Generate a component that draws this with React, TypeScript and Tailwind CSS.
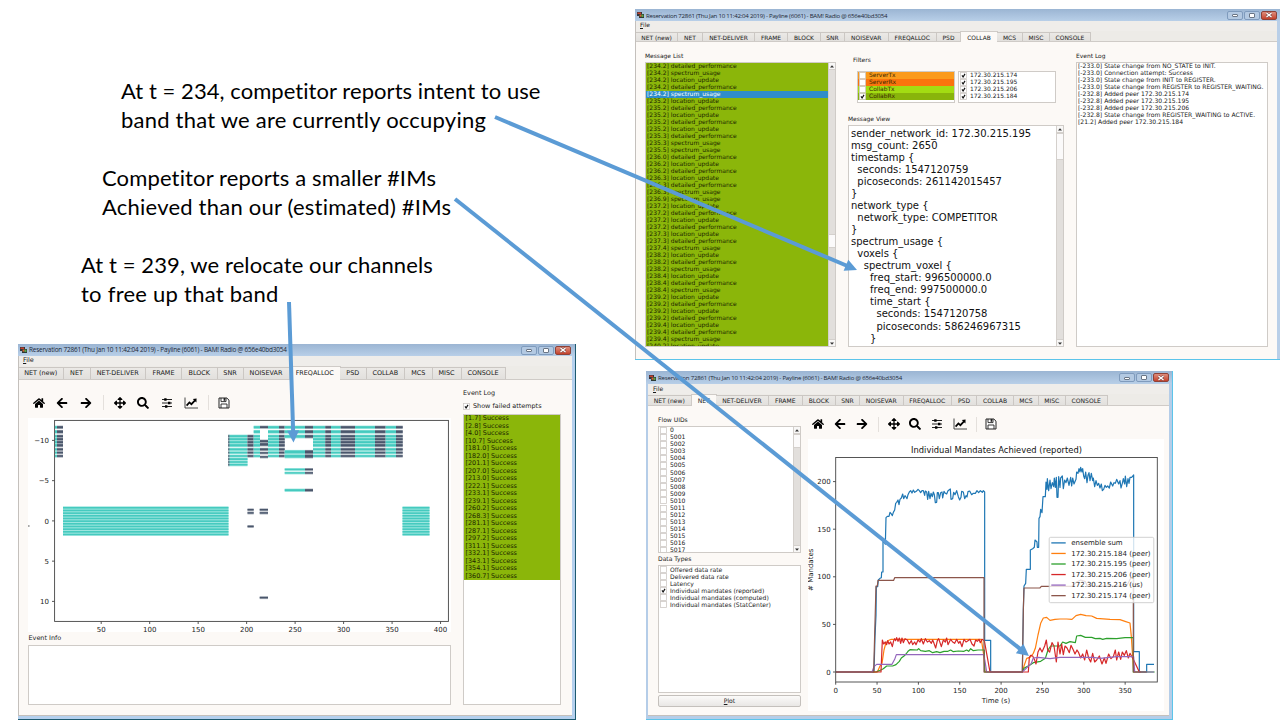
import React from "react";
import { FaHome, FaArrowLeft, FaArrowRight, FaArrowsAlt, FaSearch } from "react-icons/fa";

const TITLE = "Reservation 72861 (Thu Jan 10 11:42:04 2019) - Payline (6061) - BAM! Radio @ 656e40bd3054";

const TAB_NAMES = [
  "NET (new)", "NET", "NET-DELIVER", "FRAME", "BLOCK", "SNR", "NOISEVAR",
  "FREQALLOC", "PSD", "COLLAB", "MCS", "MISC", "CONSOLE",
];

const COLLAB_TABS = [
  "w-[42px]", "w-[25px]", "w-[52px]", "w-[33px]", "w-[33px]", "w-[24px]", "w-[43.5px]",
  "w-[48.5px]", "w-[24px]", "w-[36px]", "w-[26px]", "w-[27px]", "w-[41px]",
];
const FREQ_TABS = [
  "w-[44.5px]", "w-[27px]", "w-[55.5px]", "w-[36px]", "w-[35.5px]", "w-[26px]", "w-[46px]",
  "w-[50.5px]", "w-[26.5px]", "w-[38.5px]", "w-[27.5px]", "w-[29px]", "w-[44px]",
];
const NET_TABS = [
  "w-[43.5px]", "w-[24.5px]", "w-[53px]", "w-[33.5px]", "w-[33.5px]", "w-[24px]", "w-[43.5px]",
  "w-[48.5px]", "w-[25px]", "w-[37px]", "w-[25px]", "w-[26.5px]", "w-[42.5px]",
];

function CaptionButtons() {
  return (
    <div className="flex gap-px">
      <div className="flex h-[9px] w-[16px] items-center justify-center rounded-[2px] border border-[#7f9bbd] bg-[#b3c9e2]">
        <div className="mt-px h-[3px] w-[6px] rounded-[1px] border border-[#6a7686] bg-white" />
      </div>
      <div className="flex h-[9px] w-[16px] items-center justify-center rounded-[2px] border border-[#7f9bbd] bg-[#b3c9e2]">
        <div className="h-[5px] w-[6px] rounded-[1px] border border-[#6a7686] bg-white" />
      </div>
      <div className="flex h-[9px] w-[16px] items-center justify-center rounded-[2px] border border-[#8e4238] bg-linear-to-b from-[#dd8c7c] to-[#c4402a]">
        <svg width="8" height="6" viewBox="0 0 8 6">
          <path d="M1.5 1L6.5 5M6.5 1L1.5 5" stroke="#7c4a48" strokeWidth="2.4" />
          <path d="M1.5 1L6.5 5M6.5 1L1.5 5" stroke="#ffffff" strokeWidth="1.4" />
        </svg>
      </div>
    </div>
  );
}

function TitleBar({ heightClass, textClass, edgeClass }: { heightClass: string; textClass: string; edgeClass: string }) {
  return (
    <div className={`flex shrink-0 items-center bg-linear-to-b from-[#9bb5d3] to-[#b8cfe8] pl-[2px] ${edgeClass} ${heightClass}`}>
      <svg className="mr-[2px] shrink-0" width="7" height="6" viewBox="0 0 7 6">
        <rect x="0" y="0" width="5" height="4" fill="#30343c" />
        <rect x="0.5" y="0.5" width="3.6" height="1.5" fill="#c8402c" />
        <rect x="2" y="2" width="5" height="4" fill="#2c3a34" />
        <rect x="2.6" y="2.6" width="2" height="2" fill="#e06030" />
        <rect x="4.6" y="2.6" width="1.8" height="2.4" fill="#58a848" />
      </svg>
      <div className={`whitespace-nowrap font-['Open_Sans',sans-serif] text-[#1c2735] ${textClass}`}>{TITLE}</div>
      <div className="ml-auto">
        <CaptionButtons />
      </div>
    </div>
  );
}

function TabBar({ widths, active, heightClass }: { widths: string[]; active: string; heightClass: string }) {
  return (
    <div className={`flex shrink-0 items-end border-b border-[#cfcbc7] bg-[#edebe7] ${heightClass}`}>
      {TAB_NAMES.map((name, i) => (
        <div
          key={name}
          className={
            name === active
              ? `-mb-px -ml-px -mr-px box-content flex h-full shrink-0 items-center justify-center whitespace-nowrap border-x border-t border-[#cfcbc7] bg-[#fcf9f6] ${widths[i]}`
              : `flex h-[calc(100%-1px)] shrink-0 items-center justify-center whitespace-nowrap border-r border-t border-[#cbc7c3] bg-linear-to-b from-[#ebe9e6] to-[#e2e0dd] ${widths[i]}`
          }
        >
          {name}
        </div>
      ))}
    </div>
  );
}

function Check({ on }: { on?: boolean }) {
  return (
    <svg className="block shrink-0" width="7" height="7" viewBox="0 0 7 7">
      <rect x="0.5" y="0.5" width="6" height="6" fill="#ffffff" stroke="#cfcac6" strokeWidth="0.8" />
      {on && <path d="M2 3.4L3.1 5L5 1.9" fill="none" stroke="#111111" strokeWidth="1.2" />}
    </svg>
  );
}

function ScrollBar({ thumbClass }: { thumbClass: string }) {
  return (
    <div className="flex w-[7px] shrink-0 flex-col border-l border-[#d4d0cc] bg-[#e2dfdc]">
      <div className="flex h-[7px] items-center justify-center border-b border-[#d4d0cc] bg-[#f8f7f6]">
        <svg width="4" height="3" viewBox="0 0 4 3"><path d="M0 2.5L2 0.3L4 2.5Z" fill="#333" /></svg>
      </div>
      <div className={`border-y border-[#d4d0cc] bg-[#fbfafa] ${thumbClass}`} />
      <div className="mt-auto flex h-[7px] items-center justify-center border-t border-[#d4d0cc] bg-[#f8f7f6]">
        <svg width="4" height="3" viewBox="0 0 4 3"><path d="M0 0.5L2 2.7L4 0.5Z" fill="#333" /></svg>
      </div>
    </div>
  );
}

function Toolbar({ gapClass, firstSepClass, lastSepClass }: { gapClass: string; firstSepClass: string; lastSepClass: string }) {
  return (
    <div className={`flex items-center text-[12px] text-black ${gapClass}`}>
      <FaHome />
      <FaArrowLeft />
      <FaArrowRight />
      <div className={`h-[15px] border-l border-[#e4e0dc] ${firstSepClass}`} />
      <FaArrowsAlt />
      <FaSearch />
      <svg width="12" height="12" viewBox="0 0 12 12">
        <path d="M1 2.5H11M1 6H11M1 9.5H11" stroke="#222" strokeWidth="1" />
        <path d="M3.2 2.5H5.6M7 6H9.4M4 9.5H6.4" stroke="#000" strokeWidth="2.6" />
      </svg>
      <svg width="14" height="12" viewBox="0 0 14 12">
        <path d="M1 0.5V11H14" fill="none" stroke="#333" strokeWidth="0.9" />
        <path d="M2.6 8.6L5.4 5.4L7.4 7.2L11 3.4" fill="none" stroke="#000" strokeWidth="1.7" />
        <path d="M8.8 2L12.6 1.6L12.4 5.4Z" fill="#000" />
      </svg>
      <div className={`h-[15px] border-l border-[#e4e0dc] ${lastSepClass}`} />
      <svg width="12" height="12" viewBox="0 0 12 12">
        <path d="M1 1H8.8L11 3.2V11H1Z" fill="#ffffff" stroke="#222" strokeWidth="1" />
        <path d="M3 1V4.6H8V1M3 11V7H9V11" fill="none" stroke="#222" strokeWidth="0.9" />
        <rect x="5.6" y="1" width="1.6" height="2.8" fill="#222" />
      </svg>
    </div>
  );
}

const MESSAGES = [
  "[234.2] detailed_performance", "[234.2] spectrum_usage", "[234.2] location_update", "[234.2] detailed_performance",
  "[234.2] spectrum_usage", "[235.2] location_update", "[235.2] detailed_performance", "[235.2] location_update",
  "[235.2] detailed_performance", "[235.2] location_update", "[235.3] detailed_performance", "[235.3] spectrum_usage",
  "[235.5] spectrum_usage", "[236.0] detailed_performance", "[236.2] location_update", "[236.2] detailed_performance",
  "[236.3] location_update", "[236.3] detailed_performance", "[236.3] spectrum_usage", "[236.9] spectrum_usage",
  "[237.2] location_update", "[237.2] detailed_performance", "[237.2] location_update", "[237.2] detailed_performance",
  "[237.3] location_update", "[237.3] detailed_performance", "[237.4] spectrum_usage", "[238.2] location_update",
  "[238.2] detailed_performance", "[238.2] spectrum_usage", "[238.4] location_update", "[238.4] detailed_performance",
  "[238.4] spectrum_usage", "[239.2] location_update", "[239.2] detailed_performance", "[239.2] location_update",
  "[239.2] detailed_performance", "[239.4] location_update", "[239.4] detailed_performance", "[239.4] spectrum_usage",
  "[240.2] location_update",
];
const SELECTED_MESSAGE = 4;

const MESSAGE_VIEW = `sender_network_id: 172.30.215.195
msg_count: 2650
timestamp {
  seconds: 1547120759
  picoseconds: 261142015457
}
network_type {
  network_type: COMPETITOR
}
spectrum_usage {
  voxels {
    spectrum_voxel {
      freq_start: 996500000.0
      freq_end: 997500000.0
      time_start {
        seconds: 1547120758
        picoseconds: 586246967315
      }`;

const COLLAB_LOG = [
  "[-233.0] State change from NO_STATE to INIT.",
  "[-233.0] Connection attempt: Success",
  "[-233.0] State change from INIT to REGISTER.",
  "[-233.0] State change from REGISTER to REGISTER_WAITING.",
  "[-232.8] Added peer 172.30.215.174",
  "[-232.8] Added peer 172.30.215.195",
  "[-232.8] Added peer 172.30.215.206",
  "[-232.8] State change from REGISTER_WAITING to ACTIVE.",
  "[21.2] Added peer 172.30.215.184",
];

const FILTERS = [
  { name: "ServerTx", color: "bg-[#fa9a1b]", on: false },
  { name: "ServerRx", color: "bg-[#fa730d]", on: false },
  { name: "CollabTx", color: "bg-[#a3dc12]", on: false },
  { name: "CollabRx", color: "bg-[#89b40b]", on: true },
];
const PEERS = ["172.30.215.174", "172.30.215.195", "172.30.215.206", "172.30.215.184"];

function CollabWindow() {
  return (
    <section className="absolute left-[635px] top-[9px] flex h-[351px] w-[645px] flex-col border-b border-[#5cc4ea] bg-[#b9cfe8] font-['DejaVu_Sans',sans-serif] text-[5.95px] leading-[7px] text-[#1a1a1a]">
      <TitleBar heightClass="h-[12px]" textClass="text-[6.1px] tracking-[-0.23px]" edgeClass="pr-[3px]" />
      <div className="mr-[3px] flex min-h-0 flex-1 flex-col border-l border-[#c4c0bc] bg-[#fcf9f6]">
        <div className="h-[10px] shrink-0 bg-[#efedea] pl-[4px]"><u>F</u>ile</div>
        <TabBar widths={COLLAB_TABS} active="COLLAB" heightClass="h-[11px]" />
        <div className="flex min-h-0 flex-1 pb-[12px] pl-[9px] pr-[9px] pt-[10px]">
          <div className="flex w-[191px] flex-col">
            <div className="h-[10px]">Message List</div>
            <div className="flex min-h-0 flex-1 border border-[#cfcbc7] bg-white">
              <div className="min-w-0 flex-1 overflow-hidden bg-[#8bb60a] text-[6.02px]">
                {MESSAGES.map((m, i) => (
                  <div
                    key={i}
                    className={
                      i === SELECTED_MESSAGE
                        ? "h-[7px] whitespace-nowrap bg-[#2f8dc9] pl-[1px] leading-[5.6px] text-white"
                        : "h-[7px] whitespace-nowrap pl-[1px] leading-[5.6px] text-[#1d2600]"
                    }
                  >
                    {m}
                  </div>
                ))}
              </div>
              <ScrollBar thumbClass="mt-[164px] h-[14px]" />
            </div>
          </div>
          <div className="ml-[12px] flex w-[216px] flex-col pt-[4px]">
            <div className="h-[15px] pl-[5px]">Filters</div>
            <div className="ml-[9px] flex h-[32px] gap-[3px]">
              <div className="w-[98px] border border-[#cfcbc7] bg-white">
                {FILTERS.map((f) => (
                  <div key={f.name} className={`flex h-[7px] items-center pl-[1px] text-[#3a2a00] ${f.color}`}>
                    <Check on={f.on} />
                    <span className="ml-[3px] pb-[1.4px]">{f.name}</span>
                  </div>
                ))}
              </div>
              <div className="w-[98px] border border-[#cfcbc7] bg-white">
                {PEERS.map((p) => (
                  <div key={p} className="flex h-[7px] items-center pl-[1px]">
                    <Check on />
                    <span className="ml-[3px] pb-[1.4px]">{p}</span>
                  </div>
                ))}
              </div>
            </div>
            <div className="mt-[12px] h-[10px]">Message View</div>
            <div className="flex min-h-0 flex-1 border border-[#cfcbc7] bg-white">
              <pre className="m-0 min-w-0 flex-1 overflow-hidden pl-[2px] pt-[2px] font-['DejaVu_Sans',sans-serif] text-[10px] leading-[12.03px] text-[#111]">
                {MESSAGE_VIEW}
              </pre>
              <ScrollBar thumbClass="h-[27px]" />
            </div>
          </div>
          <div className="ml-[12px] flex min-w-0 flex-1 flex-col">
            <div className="h-[10px]">Event Log</div>
            <div className="min-h-0 flex-1 border border-[#cfcbc7] bg-white pl-[1px] text-[6.05px]">
              {COLLAB_LOG.map((l, i) => (
                <div key={i} className="h-[7px] whitespace-nowrap leading-[5.6px]">{l}</div>
              ))}
            </div>
          </div>
        </div>
      </div>
    </section>
  );
}

const ALLOC_EVENTS = [
  "1.7", "2.8", "4.0", "10.7", "181.0", "182.0", "201.1", "207.0", "213.0", "222.1", "233.1",
  "239.1", "260.2", "268.3", "281.1", "287.1", "297.2", "311.1", "332.1", "343.1", "354.1", "360.7",
];

/* Rows of the upper channel group: [top, height] */
const HI_ROWS = [[426, 2.6], [430.3, 3], [435, 3]];
const MID_ROWS = [[435, 2.6], [438, 2.6], [441, 2.6], [444, 2.8]];
const LOW_ROWS = [[448.2, 2.4], [451.6, 2.2], [455, 2.2]];
const ALL_ROWS = [...HI_ROWS.slice(0, 2), ...MID_ROWS, ...LOW_ROWS];

const TEAL = "#45cabf";
const TEAL_BACK = "#9ce6df";
const SLATE = "#4a566b";
const SLATE_BACK = "#a3aab5";

type Block = { x: number; w: number; rows: number[][]; dark?: boolean };
const BLOCKS: Block[] = [
  { x: 55, w: 2, rows: ALL_ROWS },
  { x: 57, w: 6, rows: ALL_ROWS, dark: true },
  { x: 228.5, w: 19, rows: [...MID_ROWS, ...LOW_ROWS, [458, 2.4], [461, 2.2], [463.7, 2.2]] },
  { x: 228.3, w: 1, rows: [...MID_ROWS, ...LOW_ROWS, [458, 2.4], [461, 2.2], [463.7, 2.2]], dark: true },
  { x: 247.5, w: 6.2, rows: [...MID_ROWS, ...LOW_ROWS], dark: true },
  { x: 253.7, w: 6.3, rows: ALL_ROWS },
  { x: 260, w: 8, rows: [[426, 2.4], [440, 2.6], [443, 3], [448.2, 2.4], [452, 2], [456, 2]], dark: true },
  { x: 268, w: 11, rows: ALL_ROWS },
  { x: 279, w: 5.7, rows: ALL_ROWS, dark: true },
  { x: 284.7, w: 20.3, rows: [...HI_ROWS, [450.3, 3.4], [454.6, 3.4], [468.5, 2], [472, 2], [489, 2.5]] },
  { x: 305, w: 8, rows: [...HI_ROWS, [450.3, 3.4], [454.6, 3.4], [468.5, 2], [472, 2], [489, 2.5]], dark: true },
  { x: 313, w: 12.3, rows: ALL_ROWS },
  { x: 325.3, w: 5.7, rows: ALL_ROWS, dark: true },
  { x: 331, w: 9.7, rows: ALL_ROWS },
  { x: 340.7, w: 14.3, rows: ALL_ROWS, dark: true },
  { x: 355, w: 20, rows: ALL_ROWS },
  { x: 375, w: 10.7, rows: ALL_ROWS, dark: true },
  { x: 385.7, w: 10.3, rows: ALL_ROWS },
  { x: 396, w: 6.7, rows: ALL_ROWS, dark: true },
  { x: 247.5, w: 6.2, rows: [[508.8, 2], [512, 2], [525.5, 2]], dark: true },
  { x: 259.7, w: 8.3, rows: [[508.8, 2], [512, 2], [596.7, 2]], dark: true },
];
const LOW_BANDS = Array.from({ length: 11 }, (_, i) => 507 + i * 2.67);

function FreqChart() {
  return (
    <svg className="block shrink-0 bg-white font-['DejaVu_Sans',sans-serif]" width="423" height="214" viewBox="28 418 423 214" fontSize="7" fill="#222">
      {BLOCKS.map((b, i) => (
        <g key={i}>
          {b.rows.map(([y, h]) => (
            <g key={y}>
              <rect x={b.x} y={y - 0.4} width={b.w} height={h + 0.8} fill={b.dark ? SLATE_BACK : TEAL_BACK} />
              <rect x={b.x} y={y + 0.2} width={b.w} height={h - 0.6} fill={b.dark ? SLATE : TEAL} />
            </g>
          ))}
        </g>
      ))}
      {[[63, 165.5], [402.5, 27]].map(([x, w]) => (
        <g key={x}>
          <rect x={x} y="506.3" width={w} height="29.4" fill={TEAL_BACK} />
          {LOW_BANDS.map((y) => (
            <rect key={y} x={x} y={y} width={w} height="1.6" fill={TEAL} />
          ))}
        </g>
      ))}
      <rect x="54.6" y="420.4" width="393.8" height="201" fill="none" stroke="#444" strokeWidth="0.9" />
      {["−10", "−5", "0", "5", "10"].map((t, i) => (
        <g key={t}>
          <path d={`M52 ${440.4 + i * 40.25}h2.6`} stroke="#444" strokeWidth="0.9" />
          <text x="49" y={443 + i * 40.25} textAnchor="end">{t}</text>
        </g>
      ))}
      {["50", "100", "150", "200", "250", "300", "350", "400"].map((t, i) => (
        <g key={t}>
          <path d={`M${101.2 + i * 48.48} 621.4v2.6`} stroke="#444" strokeWidth="0.9" />
          <text x={101.2 + i * 48.48} y="632.4" textAnchor="middle">{t}</text>
        </g>
      ))}
      <rect x="28" y="525.5" width="1.6" height="1" fill="#555" />
    </svg>
  );
}

function FreqWindow() {
  return (
    <section className="absolute left-[18px] top-[344px] flex h-[376px] w-[558px] flex-col border-b border-r border-[#1d5a70] bg-[#b5d0ee] font-['DejaVu_Sans',sans-serif] text-[6.45px] leading-[7.5px] text-[#1a1a1a]">
      <TitleBar heightClass="h-[12px]" textClass="text-[6.4px] tracking-[-0.19px]" edgeClass="pr-[4px]" />
      <div className="mb-[3px] mr-[3px] flex min-h-0 flex-1 flex-col border-b border-l border-[#c4c0bc] bg-[#fcf9f6]">
        <div className="h-[10px] shrink-0 bg-[#efedea] pl-[4px] pt-[1px]"><u>F</u>ile</div>
        <TabBar widths={FREQ_TABS} active="FREQALLOC" heightClass="h-[14px]" />
        <div className="flex min-h-0 flex-1 pb-[10px] pl-[9px] pr-[11px]">
          <div className="flex w-[423px] flex-col">
            <div className="flex h-[38px] items-center pb-0 pl-[5px] pt-[7px]">
              <Toolbar gapClass="gap-[11.3px]" firstSepClass="-mr-[1px]" lastSepClass="-ml-[1.5px] -mr-[2px]" />
            </div>
            <FreqChart />
            <div className="h-[13px] pl-[0.5px] pt-[3px]">Event Info</div>
            <div className="min-h-0 flex-1 border border-[#cfcbc7] bg-white" />
          </div>
          <div className="ml-[12px] flex min-w-0 flex-1 flex-col pt-[10px]">
            <div className="h-[11px]">Event Log</div>
            <div className="flex h-[13px] items-center pb-[2px]">
              <Check on />
              <span className="ml-[3px] whitespace-nowrap">Show failed attempts</span>
            </div>
            <div className="min-h-0 flex-1 border border-[#cfcbc7] bg-white">
              <div className="bg-[#8bb60a] text-[#1d2600]">
                {ALLOC_EVENTS.map((t) => (
                  <div key={t} className="h-[7.51px] whitespace-nowrap pl-[1.5px]">[{t}] Success</div>
                ))}
              </div>
            </div>
          </div>
        </div>
      </div>
    </section>
  );
}

const FLOWS = ["0", ...Array.from({ length: 17 }, (_, i) => String(5001 + i))];
const DATA_TYPES = [
  "Offered data rate", "Delivered data rate", "Latency",
  "Individual mandates (reported)", "Individual mandates (computed)", "Individual mandates (StatCenter)",
];

const LEGEND = [
  { name: "ensemble sum", color: "#1f77b4" },
  { name: "172.30.215.184 (peer)", color: "#ff7f0e" },
  { name: "172.30.215.195 (peer)", color: "#2ca02c" },
  { name: "172.30.215.206 (peer)", color: "#d62728" },
  { name: "172.30.215.216 (us)", color: "#9467bd" },
  { name: "172.30.215.174 (peer)", color: "#8c564b" },
];

/* Series are kept at three units per pixel, origin at (800, 450). */
const SERIES = [
  {
    color: "#1f77b4",
    d: "M108 666H222L225 560 228 495 229 410H233L235 390 240 385 244 383 245 366H249V270L256 283 258 203 262 199H267L270 187 274 192 277 197 280 187 284 180 287 160 290 157 294 150 297 164 300 148 304 144 308 132 311 146 315 137 318 141 321 146 324 134 328 126 332 122 336 129 340 120 344 127 349 124 354 118 358 122 362 128 366 122 370 122 374 136 376 123 380 126 383 148 386 124 390 146 393 130 397 140 400 126 403 134 406 158 410 157 412 128 415 128 418 146 422 128 426 126 428 144 432 124 436 130 440 132 444 122 451 117 453 148 458 146 461 127 465 134 470 122 475 140 479 150 483 142 485 124 490 126 494 146 498 137 501 141 504 125 509 123 515 134 520 130 526 130 531 122 536 128 541 122 547 127 550 122 554 126V571H572V666H667L670 480 672 408 677 400 679 358H691V300L698 296 703 292 705 270 711 276 712 292H716L717 205 720 200 722 178 726 188 729 140H736L738 96 741 118 742 86 746 122 750 90 753 116 757 98 761 110 763 84 766 112 769 82 771 142 774 142 776 80 780 112 782 84 787 78 790 116 794 90 798 98 802 84 807 106 812 82 815 108 818 84 822 102 826 92 828 88 830 66 834 70 837 56 840 66 842 52 846 66 848 56 851 78 854 86 857 66 861 98 864 76 867 68 870 92 874 70 878 92 880 84 884 110 888 92 892 106 896 100 900 114 904 102 907 122 911 118 915 106 919 112 923 108 928 114 932 96 938 108 942 98 946 100 950 88 956 102 960 92 963 114 967 100 970 86 974 102 976 78 980 110 984 86 987 100 990 82 995 82 1001 75V605H1018V666H1040V643H1062",
  },
  {
    color: "#ff7f0e",
    d: "M108 666H232L240 648 246 640 252 600 258 578 268 570 274 568H544L552 620 555 666H667L673 645 680 625 690 622 700 610 706 595 714 555 722 520 730 504 740 502 750 511 765 508 780 507 800 507 816 508 828 497 842 493 858 497 875 498 890 505 930 508 960 509 975 514 990 519 994 560 1001 666H1022",
  },
  {
    color: "#2ca02c",
    d: "M108 666H228L238 662 250 656 260 648H278L288 644 298 634 304 624 312 618 318 612 324 604 330 599 352 600 356 596 362 602 376 604 388 602 398 608 410 605 420 608 432 604 444 604 452 600 460 605 475 603 492 604 500 600 506 604 512 596 520 602 534 600 553 600 554 666H667L672 655 680 650 690 645 700 638 722 634 736 625 744 600 752 588 780 588 788 576 798 580 810 575 826 578 830 558 842 556 856 562 875 562 886 566 900 565 908 568 920 565 950 566 975 563 1000 563V666H1064",
  },
  {
    color: "#d62728",
    d: "M108 666H243L247 570 251 582 256 576 260 584 263 572 267 582 272 576 277 590 281 572 284 566 287 572 290 563 294 574 298 564 302 580 306 564 310 578 315 566 322 570 328 582 334 572 338 584 344 576 348 584 354 570 360 576 364 566 370 582 376 566 382 576 388 572 394 580 398 570 402 580 407 594 412 572 416 566 420 578 424 590 430 570 436 576 440 564 444 584 452 568 458 576 464 580 470 568 476 580 480 574 486 590 492 568 498 576 504 572 510 568 516 582 522 588 527 570 532 574 537 568 541 578 546 568 553 572 570 666H685L688 622 692 616 698 618 704 630 708 642 714 606 720 594 726 606 734 588 739 570 743 600 749 606 756 578 762 588 769 636 774 576 780 612 785 582 790 614 795 588 801 594 808 608 813 586 820 600 825 612 831 600 836 608 842 624 848 612 854 630 860 600 866 624 872 636 878 610 884 636 890 630 898 618 906 642 913 624 918 640 926 612 933 626 940 620 946 600 950 630 956 606 962 628 967 606 973 616 979 602 985 624 990 610 1001 630 1018 666H1022",
  },
  {
    color: "#9467bd",
    d: "M108 666H216L222 650 230 643H276L284 628 289 614H551L556 640 560 666H667L694 640 700 624 715 622 750 626 780 622 880 622 900 625 950 620 1001 620 1004 666H1062",
  },
  {
    color: "#8c564b",
    d: "M108 666H221L228 408H232L234 391H281L284 383H552V666H667L670 480 672 414H720L724 409H815L830 396 842 390 856 395 862 408H980L992 385 1000 382V666H1040",
  },
];

function MandatesChart() {
  return (
    <svg className="block shrink-0 bg-white font-['DejaVu_Sans',sans-serif]" width="356" height="272" viewBox="808 439 356 272" fontSize="7" fill="#222">
      <text x="996.5" y="452.6" fontSize="8.35" textAnchor="middle" textLength="171" fill="#111">Individual Mandates Achieved (reported)</text>
      <g transform="translate(800 450) scale(0.33333)" fill="none" strokeWidth="3.6" strokeLinejoin="round">
        {SERIES.map((s) => (
          <path key={s.color} d={s.d} stroke={s.color} />
        ))}
      </g>
      <rect x="835.7" y="457.5" width="321.6" height="224.5" fill="none" stroke="#444" strokeWidth="0.9" />
      {["0", "50", "100", "150", "200"].map((t, i) => (
        <g key={t}>
          <path d={`M833 ${672 - i * 47.6}h2.7`} stroke="#444" strokeWidth="0.9" />
          <text x="830.6" y={674.6 - i * 47.6} textAnchor="end">{t}</text>
        </g>
      ))}
      {["0", "50", "100", "150", "200", "250", "300", "350"].map((t, i) => (
        <g key={t}>
          <path d={`M${835.7 + i * 41.35} 682v2.7`} stroke="#444" strokeWidth="0.9" />
          <text x={835.7 + i * 41.35} y="692.6" textAnchor="middle">{t}</text>
        </g>
      ))}
      <text x="996" y="702.8" textAnchor="middle">Time (s)</text>
      <text transform="translate(812.8 569.8) rotate(-90)" textAnchor="middle">{"# Mandates"}</text>
      <rect x="1049.2" y="537.3" width="104.6" height="65.4" rx="1.5" fill="#ffffff" fillOpacity="0.8" stroke="#cccccc" strokeWidth="0.9" />
      {LEGEND.map((l, i) => (
        <g key={l.name}>
          <path d={`M1051.3 ${542.9 + i * 10.55}h14.4`} stroke={l.color} strokeWidth="1.3" />
          <text x="1071.3" y={545.2 + i * 10.55}>{l.name}</text>
        </g>
      ))}
    </svg>
  );
}

function NetWindow() {
  return (
    <section className="absolute left-[646px] top-[371px] flex h-[349px] w-[527px] flex-col border-b border-r border-[#5cc4ea] bg-[#b5cde8] font-['DejaVu_Sans',sans-serif] text-[6.05px] leading-[7px] text-[#1a1a1a]">
      <TitleBar heightClass="h-[13px]" textClass="text-[6.1px] tracking-[-0.2px]" edgeClass="pl-[3px] pr-[3px]" />
      <div className="mb-[3px] ml-[2px] mr-[3px] flex min-h-0 flex-1 flex-col border-b border-[#c4c0bc] bg-[#fcf9f6]">
        <div className="h-[10px] shrink-0 bg-[#efedea] pl-[5px] pt-[1px]"><u>F</u>ile</div>
        <TabBar widths={NET_TABS} active="NET" heightClass="h-[12px]" />
        <div className="flex min-h-0 flex-1 pb-[4px] pl-[10px]">
          <div className="flex w-[143px] flex-col pb-[4px] pt-[10px]">
            <div className="h-[10px]">Flow UIDs</div>
            <div className="flex h-[127px] border border-[#cfcbc7] bg-white">
              <div className="min-w-0 flex-1 overflow-hidden">
                {FLOWS.map((f) => (
                  <div key={f} className="flex h-[7.06px] items-center pl-[1px]">
                    <Check />
                    <span className="ml-[3px] pb-[1.6px]">{f}</span>
                  </div>
                ))}
              </div>
              <ScrollBar thumbClass="h-[14px]" />
            </div>
            <div className="h-[12px] pt-[2px]">Data Types</div>
            <div className="h-[128px] border border-[#cfcbc7] bg-white">
              {DATA_TYPES.map((d, i) => (
                <div key={d} className="flex h-[7.06px] items-center pl-[1px]">
                  <Check on={i === 3} />
                  <span className="ml-[3px] whitespace-nowrap">{d}</span>
                </div>
              ))}
            </div>
            <div className="mt-[2px] flex h-[12px] items-center justify-center rounded-[2px] border border-[#c4c0bc] bg-linear-to-b from-[#fbfaf9] to-[#e9e7e5]">
              <span className="pb-[1px]"><u>P</u>lot</span>
            </div>
          </div>
          <div className="ml-[7px] flex flex-col">
            <div className="flex h-[33px] items-center pl-[4px] pt-[3px]">
              <Toolbar gapClass="gap-[9.9px]" firstSepClass="-mr-[1px]" lastSepClass="-ml-[1.5px] -mr-[1.5px]" />
            </div>
            <MandatesChart />
          </div>
        </div>
      </div>
    </section>
  );
}

function Arrow({ x1, y1, x2, y2 }: { x1: number; y1: number; x2: number; y2: number }) {
  const len = Math.hypot(x2 - x1, y2 - y1);
  const ux = (x2 - x1) / len;
  const uy = (y2 - y1) / len;
  const bx = x2 - ux * 12;
  const by = y2 - uy * 12;
  return (
    <g>
      <path d={`M${x1} ${y1}L${bx + ux} ${by + uy}`} stroke="#5b9bd5" strokeWidth="4" />
      <path d={`M${x2} ${y2}L${bx - uy * 6} ${by + ux * 6}L${bx + uy * 6} ${by - ux * 6}Z`} fill="#5b9bd5" />
    </g>
  );
}

export default function App() {
  return (
    <main className="relative h-[720px] w-[1280px] overflow-hidden bg-white">
      <div className="absolute left-[121px] top-[76px] whitespace-nowrap font-[Lato,sans-serif] text-[22px] leading-[29px] text-black">
        <p className="tracking-[0.06px]">At t = 234, competitor reports intent to use</p>
        <p className="tracking-[0.22px]">band that we are currently occupying</p>
      </div>
      <div className="absolute left-[102px] top-[163px] whitespace-nowrap font-[Lato,sans-serif] text-[22px] leading-[29px] text-black">
        <p className="tracking-[0.14px]">Competitor reports a smaller #IMs</p>
        <p className="tracking-[0.22px]">Achieved than our (estimated) #IMs</p>
      </div>
      <div className="absolute left-[81px] top-[250px] whitespace-nowrap font-[Lato,sans-serif] text-[22px] leading-[29px] text-black">
        <p className="tracking-[0.1px]">At t = 239, we relocate our channels</p>
        <p className="tracking-[0.25px]">to free up that band</p>
      </div>
      <CollabWindow />
      <FreqWindow />
      <NetWindow />
      <svg className="pointer-events-none absolute inset-0" width="1280" height="720" viewBox="0 0 1280 720">
        <Arrow x1={495} y1={117} x2={857} y2={270} />
        <Arrow x1={455} y1={199} x2={1029} y2={656} />
        <Arrow x1={289} y1={302} x2={293.5} y2={442.5} />
      </svg>
    </main>
  );
}
